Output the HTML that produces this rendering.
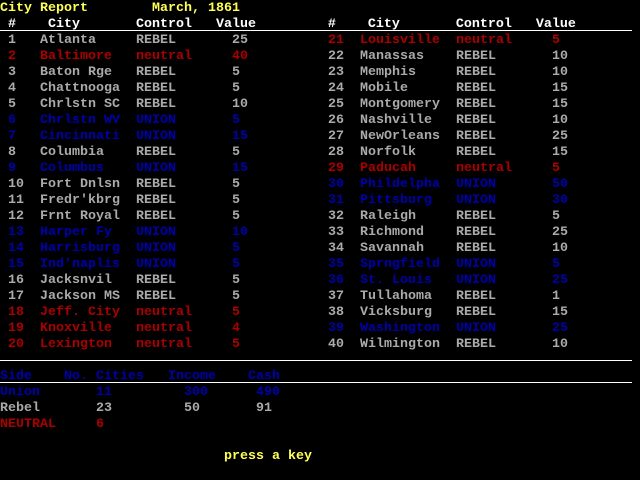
<!DOCTYPE html>
<html><head><meta charset="utf-8"><style>
html,body{margin:0;padding:0;background:#000;width:640px;height:480px;overflow:hidden}
body{position:relative;font-family:"Liberation Mono",monospace;font-size:13.333px;font-weight:bold;line-height:16px}
.r{position:absolute;left:0;height:16px;white-space:pre;margin-top:1px}
.r span{display:inline-block}
.n{width:32px}.c{width:96px}.t{width:96px}.v{width:96px}
.g{color:#aaaaaa}.red{color:#aa0000}.b{color:#0000aa}.y{color:#ffff55}.w{color:#ffffff}
.ln{position:absolute;left:0;height:1px;background:#fff}
</style></head><body>
<div class="r y" style="top:0">City Report        March, 1861</div>
<div class="r w" style="top:16px"> #    City       Control   Value         #    City       Control   Value</div>
<div class="ln" style="top:30px;width:632px"></div>

<div class="r" style="top:32px;padding-left:8px"><span class="n g">1</span><span class="c g">Atlanta</span><span class="t g">REBEL</span><span class="v g">25</span><span class="n red">21</span><span class="c red">Louisville</span><span class="t red">neutral</span><span class="red">5</span></div>
<div class="r" style="top:48px;padding-left:8px"><span class="n red">2</span><span class="c red">Baltimore</span><span class="t red">neutral</span><span class="v red">40</span><span class="n g">22</span><span class="c g">Manassas</span><span class="t g">REBEL</span><span class="g">10</span></div>
<div class="r" style="top:64px;padding-left:8px"><span class="n g">3</span><span class="c g">Baton Rge</span><span class="t g">REBEL</span><span class="v g">5</span><span class="n g">23</span><span class="c g">Memphis</span><span class="t g">REBEL</span><span class="g">10</span></div>
<div class="r" style="top:80px;padding-left:8px"><span class="n g">4</span><span class="c g">Chattnooga</span><span class="t g">REBEL</span><span class="v g">5</span><span class="n g">24</span><span class="c g">Mobile</span><span class="t g">REBEL</span><span class="g">15</span></div>
<div class="r" style="top:96px;padding-left:8px"><span class="n g">5</span><span class="c g">Chrlstn SC</span><span class="t g">REBEL</span><span class="v g">10</span><span class="n g">25</span><span class="c g">Montgomery</span><span class="t g">REBEL</span><span class="g">15</span></div>
<div class="r" style="top:112px;padding-left:8px"><span class="n b">6</span><span class="c b">Chrlstn WV</span><span class="t b">UNION</span><span class="v b">5</span><span class="n g">26</span><span class="c g">Nashville</span><span class="t g">REBEL</span><span class="g">10</span></div>
<div class="r" style="top:128px;padding-left:8px"><span class="n b">7</span><span class="c b">Cincinnati</span><span class="t b">UNION</span><span class="v b">15</span><span class="n g">27</span><span class="c g">NewOrleans</span><span class="t g">REBEL</span><span class="g">25</span></div>
<div class="r" style="top:144px;padding-left:8px"><span class="n g">8</span><span class="c g">Columbia</span><span class="t g">REBEL</span><span class="v g">5</span><span class="n g">28</span><span class="c g">Norfolk</span><span class="t g">REBEL</span><span class="g">15</span></div>
<div class="r" style="top:160px;padding-left:8px"><span class="n b">9</span><span class="c b">Columbus</span><span class="t b">UNION</span><span class="v b">15</span><span class="n red">29</span><span class="c red">Paducah</span><span class="t red">neutral</span><span class="red">5</span></div>
<div class="r" style="top:176px;padding-left:8px"><span class="n g">10</span><span class="c g">Fort Dnlsn</span><span class="t g">REBEL</span><span class="v g">5</span><span class="n b">30</span><span class="c b">Phildelpha</span><span class="t b">UNION</span><span class="b">50</span></div>
<div class="r" style="top:192px;padding-left:8px"><span class="n g">11</span><span class="c g">Fredr'kbrg</span><span class="t g">REBEL</span><span class="v g">5</span><span class="n b">31</span><span class="c b">Pittsburg</span><span class="t b">UNION</span><span class="b">30</span></div>
<div class="r" style="top:208px;padding-left:8px"><span class="n g">12</span><span class="c g">Frnt Royal</span><span class="t g">REBEL</span><span class="v g">5</span><span class="n g">32</span><span class="c g">Raleigh</span><span class="t g">REBEL</span><span class="g">5</span></div>
<div class="r" style="top:224px;padding-left:8px"><span class="n b">13</span><span class="c b">Harper Fy</span><span class="t b">UNION</span><span class="v b">10</span><span class="n g">33</span><span class="c g">Richmond</span><span class="t g">REBEL</span><span class="g">25</span></div>
<div class="r" style="top:240px;padding-left:8px"><span class="n b">14</span><span class="c b">Harrisburg</span><span class="t b">UNION</span><span class="v b">5</span><span class="n g">34</span><span class="c g">Savannah</span><span class="t g">REBEL</span><span class="g">10</span></div>
<div class="r" style="top:256px;padding-left:8px"><span class="n b">15</span><span class="c b">Ind'naplis</span><span class="t b">UNION</span><span class="v b">5</span><span class="n b">35</span><span class="c b">Sprngfield</span><span class="t b">UNION</span><span class="b">5</span></div>
<div class="r" style="top:272px;padding-left:8px"><span class="n g">16</span><span class="c g">Jacksnvil</span><span class="t g">REBEL</span><span class="v g">5</span><span class="n b">36</span><span class="c b">St. Louis</span><span class="t b">UNION</span><span class="b">25</span></div>
<div class="r" style="top:288px;padding-left:8px"><span class="n g">17</span><span class="c g">Jackson MS</span><span class="t g">REBEL</span><span class="v g">5</span><span class="n g">37</span><span class="c g">Tullahoma</span><span class="t g">REBEL</span><span class="g">1</span></div>
<div class="r" style="top:304px;padding-left:8px"><span class="n red">18</span><span class="c red">Jeff. City</span><span class="t red">neutral</span><span class="v red">5</span><span class="n g">38</span><span class="c g">Vicksburg</span><span class="t g">REBEL</span><span class="g">15</span></div>
<div class="r" style="top:320px;padding-left:8px"><span class="n red">19</span><span class="c red">Knoxville</span><span class="t red">neutral</span><span class="v red">4</span><span class="n b">39</span><span class="c b">Washington</span><span class="t b">UNION</span><span class="b">25</span></div>
<div class="r" style="top:336px;padding-left:8px"><span class="n red">20</span><span class="c red">Lexington</span><span class="t red">neutral</span><span class="v red">5</span><span class="n g">40</span><span class="c g">Wilmington</span><span class="t g">REBEL</span><span class="g">10</span></div>

<div class="ln" style="top:360px;width:632px"></div>
<div class="r b" style="top:368px">Side    No. Cities   Income    Cash</div>
<div class="ln" style="top:382px;width:632px"></div>
<div class="r b" style="top:384px">Union       11         300      490</div>
<div class="r g" style="top:400px">Rebel       23         50       91</div>
<div class="r red" style="top:416px">NEUTRAL     6</div>
<div class="r y" style="top:448px;left:224px">press a key</div>
</body></html>
